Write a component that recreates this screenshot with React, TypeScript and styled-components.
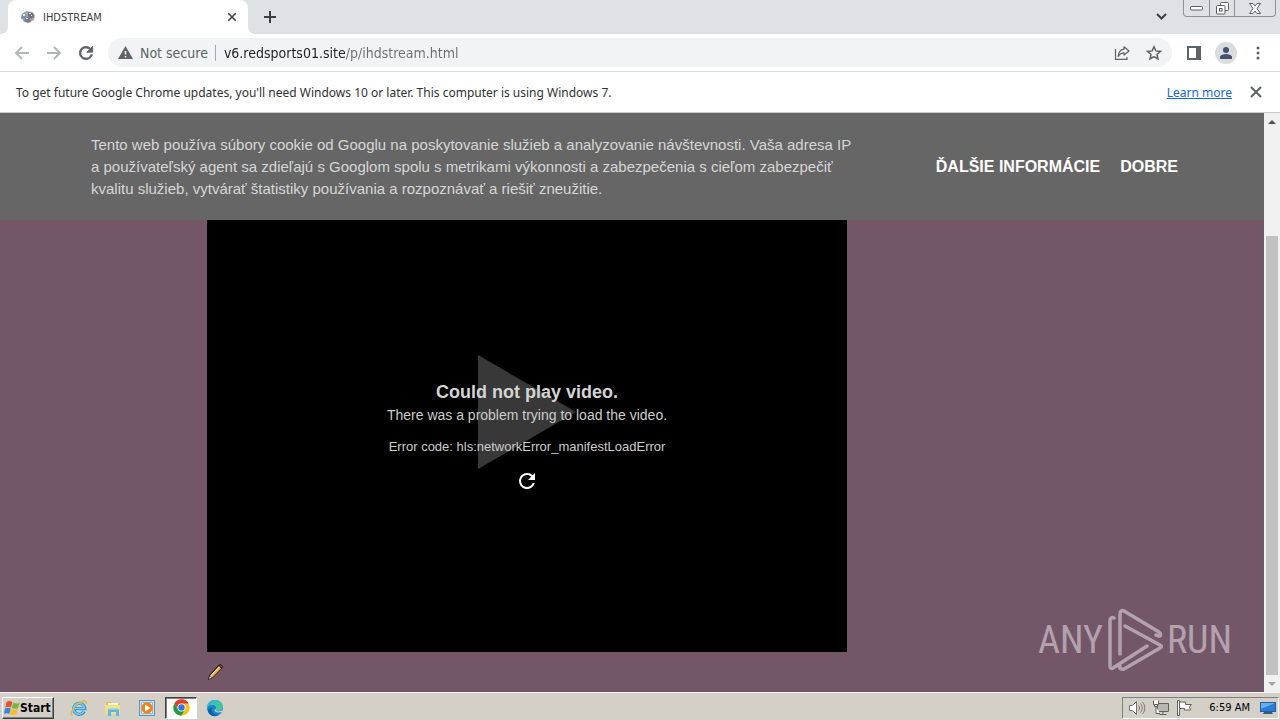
import React from "react";
import styled, { createGlobalStyle, css } from "styled-components";

const uiFont = `"DejaVu Sans Condensed", "DejaVu Sans", sans-serif`;
const pageFont = `"Liberation Sans", Arial, sans-serif`;

const GlobalStyle = createGlobalStyle`
  *, *::before, *::after { box-sizing: border-box; }
  body { margin: 0; background: #fff; font-family: ${uiFont}; }
  button { border: 0; padding: 0; background: none; font: inherit; color: inherit; cursor: pointer; }
  p, h1 { margin: 0; }
  svg { display: block; flex: none; }
`;

const Desktop = styled.div`
  display: flex;
  flex-direction: column;
  min-height: 100vh;
`;

/* Browser chrome */
const TabStrip = styled.header`
  display: flex;
  align-items: flex-start;
  height: 34px;
  padding-left: 8px;
  background: #dee1e6;
`;

const Tab = styled.div`
  position: relative;
  display: flex;
  align-items: center;
  width: 240px;
  height: 34px;
  padding: 0 10px 0 12px;
  background: #fff;
  border-radius: 8px 8px 0 0;
  font-size: 11px;
  color: #3c4043;

  &::before, &::after {
    content: "";
    position: absolute;
    bottom: 0;
    width: 8px;
    height: 8px;
  }
  &::before { left: -8px; background: radial-gradient(circle at 0 0, transparent 8px, #fff 8px); }
  &::after { right: -8px; background: radial-gradient(circle at 100% 0, transparent 8px, #fff 8px); }
`;

const TabTitle = styled.span`
  flex: 1;
  margin-left: 7px;
`;

const IconButton = styled.button<{ $size?: number; $color?: string }>`
  display: flex;
  align-items: center;
  justify-content: center;
  flex: none;
  width: ${(p) => p.$size ?? 32}px;
  height: ${(p) => p.$size ?? 32}px;
  color: ${(p) => p.$color ?? "#5f6368"};
`;

const NewTab = styled(IconButton)`
  margin: 1px 0 0 6px;
  color: #3c4043;
`;

const StripEnd = styled.div`
  display: flex;
  align-items: flex-start;
  margin-left: auto;
  padding-right: 4px;
`;

const WindowButtons = styled.div`
  display: flex;
  height: 17px;
  margin-left: 6px;
  border: 1px solid #8d9199;
  border-top: 0;
  border-radius: 0 0 4px 4px;
  color: #5a5e66;
`;

const WindowButton = styled.button<{ $wide?: boolean }>`
  display: flex;
  align-items: center;
  justify-content: center;
  width: ${(p) => (p.$wide ? 41 : 25)}px;
  height: 16px;
  & + & { border-left: 1px solid #8d9199; }
`;

const Toolbar = styled.div`
  display: flex;
  align-items: center;
  height: 38px;
  padding: 0 6px;
  background: #fff;
  border-bottom: 1px solid #dadce0;
`;

const AddressBar = styled.form`
  display: flex;
  align-items: center;
  flex: 1;
  height: 29px;
  margin: 0 6px;
  padding: 0 2px 0 10px;
  border-radius: 15px;
  background: #f1f3f4;
  font-size: 14px;
`;

const Security = styled.button`
  display: flex;
  align-items: center;
  gap: 7px;
  padding-right: 7px;
  border-right: 1px solid #a5a8ac;
  line-height: 16px;
  color: #5f6368;
`;

const UrlInput = styled.input`
  flex: 1;
  min-width: 0;
  padding: 0 0 0 8px;
  border: 0;
  outline: 0;
  background: linear-gradient(90deg, #202124 129px, #6b6f74 129px);
  background-clip: text;
  color: transparent;
  font: inherit;
`;

const Avatar = styled.span`
  display: flex;
  align-items: flex-end;
  justify-content: center;
  width: 22px;
  height: 22px;
  border-radius: 50%;
  background: #dadce0;
  overflow: hidden;
`;

const InfoBar = styled.div`
  display: flex;
  align-items: center;
  min-height: 41px;
  padding: 0 8px 0 16px;
  background: #fff;
  border-bottom: 1px solid #c9cacc;
  font-family: "Noto Sans", sans-serif;
  font-size: 12px;
  color: #303134;
`;

const LearnMore = styled.a`
  margin: 0 8px 0 auto;
  color: #1967d2;
`;

/* Web page */
const Viewport = styled.main`
  display: flex;
  flex: 1;
  font-family: ${pageFont};
`;

const Page = styled.div`
  position: relative;
  flex: 1;
  min-width: 0;
  background: #735769;
`;

const CookieNotice = styled.section`
  display: flex;
  align-items: center;
  height: 107px;
  padding: 0 86px 0 91px;
  background: #666;
  font-size: 16px;
  line-height: 22px;
`;

const CookieText = styled.p`
  flex: 1;
  max-width: 768px;
  font-size: 15px;
  color: #d6d6d6;
`;

const CookieActions = styled.div`
  display: flex;
  gap: 20px;
  flex: none;
  margin-left: auto;
  color: #fff;
  font-weight: 700;
  a { color: inherit; text-decoration: none; }
`;

const Player = styled.section`
  position: relative;
  display: flex;
  align-items: center;
  justify-content: center;
  max-width: 640px;
  height: 432px;
  padding-bottom: 48px;
  margin-left: 207px;
  background: #000;
`;

const PlayerMessage = styled.div`
  position: absolute;
  inset: 160px 0 auto;
  display: flex;
  flex-direction: column;
  align-items: center;
  color: #ccc;
`;

const ErrorTitle = styled.h1`
  font-size: 18px;
  line-height: 24px;
  color: #d4d4d4;
`;

const ErrorLine = styled.p<{ $code?: boolean }>`
  font-size: ${(p) => (p.$code ? 13 : 14)}px;
  line-height: 22px;
  margin-top: ${(p) => (p.$code ? 10 : 0)}px;
`;

const Retry = styled(IconButton)`
  margin-top: 11px;
`;

const EditLink = styled.a`
  display: inline-block;
  margin: 11px 0 0 207px;
`;

const Watermark = styled.div`
  position: absolute;
  right: 32px;
  bottom: 20px;
  display: flex;
  align-items: center;
  gap: 4px;
  font-family: "Roboto Condensed", "Liberation Sans Narrow", "Liberation Sans Narrow", "Liberation Sans", sans-serif;
  font-size: 38px;
  line-height: 62px;
  color: #b3a2ae;
`;

const Scrollbar = styled.div`
  display: flex;
  flex-direction: column;
  align-items: center;
  flex: none;
  width: 16px;
  background: #f1f1f1;
`;

const ScrollArrow = styled.button`
  display: flex;
  align-items: center;
  justify-content: center;
  width: 16px;
  height: 17px;
`;

const ScrollThumb = styled.div`
  flex: 1;
  width: 12px;
  margin-top: 106px;
  background: #c1c1c1;
`;

/* Taskbar */
const Taskbar = styled.footer`
  display: flex;
  align-items: center;
  height: 28px;
  padding: 2px 1px 0 2px;
  background: #d4d0c8;
  border-top: 1px solid #f4f2ee;
  color: #000;
`;

const StartButton = styled.button`
  display: flex;
  align-items: center;
  width: 52px;
  height: 22px;
  padding-left: 1px;
  background: #d4d0c8;
  border: 1px solid;
  border-color: #fff #404040 #404040 #fff;
  box-shadow: inset -1px -1px #808080;
  font-size: 12px;
  font-weight: 700;
`;

const Launchers = styled.nav`
  display: flex;
  gap: 2px;
  margin-left: 9px;
`;

const Launcher = styled.button<{ $active?: boolean }>`
  display: flex;
  align-items: center;
  justify-content: center;
  width: 32px;
  height: 22px;
  border: 1px solid transparent;
  ${(p) =>
    p.$active &&
    css`
      background: #fff;
      border-color: #404040 #fff #fff #404040;
      box-shadow: inset 1px 1px #808080;
    `}
`;

const Tray = styled.div`
  display: flex;
  align-items: center;
  gap: 6px;
  height: 22px;
  margin-left: auto;
  padding: 0 1px 0 5px;
  border: 1px solid;
  border-color: #808080 #fff #fff #808080;
  font-size: 11px;
`;

const Clock = styled.time`
  margin: 0 4px 0 10px;
`;

/* Icons */
const Stroke = ({ d, size = 16, width = 2 }: { d: string; size?: number; width?: number }) => (
  <svg width={size} height={size} viewBox="0 0 16 16" fill="none" stroke="currentColor" strokeWidth={width}>
    <path d={d} />
  </svg>
);

const Reload = ({ size = 20, weight = 0 }: { size?: number; weight?: number }) => (
  <svg width={size} height={size} viewBox="0 0 24 24" fill="currentColor" stroke="currentColor" strokeWidth={weight}>
    <path d="M17.65 6.35A7.96 7.96 0 0 0 12 4a8 8 0 1 0 7.73 10h-2.08A6 6 0 1 1 12 6c1.66 0 3.14.69 4.22 1.78L13 11h7V4z" />
  </svg>
);

const Favicon = () => (
  <svg width="16" height="16" viewBox="0 0 16 16">
    <path d="M2 5l4-3 6 1 3 3-1 5-5 3-5-1-3-4z" fill="#a7abb0" />
    <path d="M2 5l3-1 2 3-3 3-3-1z" fill="#7499ac" />
    <path d="M8 3l5 1 1 4-3 2-3-3z" fill="#6b717b" />
    <path d="M5 9l4-2 2 5-3 2-4-2z" fill="#7c8289" />
    <path d="M3 5h2v2H3zM9 4h2v1H9zM6 9h2v1H6zM11 6h1v1h-1z" fill="#e9edf0" />
    <path d="M8 11h2v1H8zM12 7h1v2h-1z" fill="#a3616a" />
  </svg>
);

const Chevron = () => <Stroke size={16} width={2} d="M4 6l4.500 4.500L13 6" />;

const Warning = () => (
  <svg width="15" height="14" viewBox="0 0 15 14">
    <path d="M7.500 0L15 13H0z" fill="#5f6368" />
    <path d="M6.700 5h1.600v3.500H6.700zM6.700 10h1.600v1.500H6.700z" fill="#f1f3f4" />
  </svg>
);

const Share = () => (
  <svg width="16" height="16" viewBox="0 0 16 16" fill="none" stroke="currentColor" strokeWidth="1.200">
    <path d="M1.500 4v10.400h11.500v-2.400" />
    <path d="M10 1.800L15 6l-5 4V7.800C7.500 7.800 5.600 9 4.200 11.500c.2-4 2.200-6.800 5.800-7.300z" strokeLinejoin="round" />
  </svg>
);

const Star = () => (
  <svg width="16" height="16" viewBox="0 0 16 16" fill="none" stroke="currentColor" strokeWidth="1.500">
    <path d="M8 1.700l1.900 4.200 4.600.5L11 9.500l1 4.500-4-2.400L4 14l1-4.500L1.500 6.400l4.600-.5z" />
  </svg>
);

const SidePanel = () => (
  <svg width="16" height="16" viewBox="0 0 16 16" fill="currentColor">
    <path fillRule="evenodd" d="M1 1h14v14H1zM3 3v10h7V3z" />
  </svg>
);

const Person = () => (
  <svg width="14" height="20" viewBox="0 0 14 20" fill="#46536f">
    <circle cx="7" cy="6" r="3" />
    <path d="M1 15v-2c0-2 4-3 6-3s6 1 6 3v2z" />
  </svg>
);

const Dots = () => (
  <svg width="4" height="16" viewBox="0 0 4 16" fill="currentColor">
    <circle cx="2" cy="3" r="1.500" /><circle cx="2" cy="8" r="1.500" /><circle cx="2" cy="13" r="1.500" />
  </svg>
);

const MinimizeIcon = () => (
  <svg width="13" height="6" viewBox="0 0 13 6" fill="#fff" stroke="currentColor">
    <rect x=".5" y="1.500" width="12" height="3.500" rx="1" />
  </svg>
);

const RestoreIcon = () => (
  <svg width="13" height="13" viewBox="0 0 13 13" fill="#fff" stroke="currentColor">
    <rect x="4.500" y=".5" width="8" height="8" rx="1" />
    <rect x=".5" y="3.500" width="8.500" height="8.500" rx="1" />
    <rect x="3.500" y="6.500" width="2.500" height="2.500" />
  </svg>
);

const CloseWindowIcon = () => (
  <svg width="12" height="11" viewBox="0 0 12 11" fill="#fff" stroke="currentColor">
    <path d="M.5.5h3.500l2 2.500 2-2.500h3.500L8 5.500l3.500 5H8L6 8l-2 2.500H.5L4 5.500z" strokeLinejoin="round" />
  </svg>
);

const Pencil = () => (
  <svg width="18" height="18" viewBox="0 0 18 18">
    <path d="M2 12.500L11.500 2l2-1 2.500 2.500-1 2L5.500 15 1 17z" fill="#1c1410" />
    <path d="M3 13L12 3.200l2.200 2.200L5 14.800z" fill="#e0a83c" />
    <path d="M3.200 12.700L12 3.200l.9.900-8.700 9.600z" fill="#f8dc92" />
    <path d="M12.500 2.500l1-.6 1.700 1.700-.6 1z" fill="#8a5c4c" />
    <path d="M2.800 13.300l1.800 1.500-2.600 1.100z" fill="#efe0c4" />
  </svg>
);

const AnyRunMark = () => (
  <svg width="56" height="64" viewBox="0 0 56 64" fill="none" stroke="#b3a2ae" strokeWidth="3.500" strokeLinecap="round" strokeLinejoin="round">
    <path d="M7 10c-2-1-4 0-4 3v45c0 2 1 3 3 2l34-22" />
    <path d="M13 46V6c0-3 2-4 4-3l35 21c2 1 2 4 0 4l-3-1" />
    <path d="M18 18l35 19c2 1 2 2 0 3L17 61c-3 1-5-1-4-3" />
  </svg>
);

const WindowsFlag = () => (
  <svg width="16" height="16" viewBox="0 0 16 16">
    <path d="M2.500 2c2-1.400 4-1.200 6 0L7 7.500c-1.700-1-3.800-1-5.700 0z" fill="#e6532b" />
    <path d="M9.300 2.500c2 1.200 4.200 1.200 6.500 0L14 8c-2 1.200-4.100 1-6.200 0z" fill="#76b83a" />
    <path d="M1 8.500c1.900-1 3.900-1 5.700 0l-1.500 5.500c-1.700-1-3.700-1-5.200 0z" fill="#3c86d6" />
    <path d="M7.500 9c2 1 4.100 1.100 6.200 0l-1.500 5.300c-2.200 1.200-4.200 1-6.200-.1z" fill="#f4bd24" />
  </svg>
);

const IeIcon = () => (
  <svg width="18" height="18" viewBox="0 0 18 18" fill="none">
    <path d="M14.200 12.300A5.500 5.500 0 1 1 14.800 9.700H4.500" stroke="#2d8fd0" strokeWidth="3.200" />
    <path d="M14 12A5.500 5.500 0 1 1 14.500 9.500H5" stroke="#7dcdf2" strokeWidth="1.500" />
    <path d="M2.500 16.500C-1 15 4 7 10 3.500c4.500-2.700 7.500-2.200 6 1.500" stroke="#e5b63c" strokeWidth="1.400" />
  </svg>
);

const FolderIcon = () => (
  <svg width="18" height="18" viewBox="0 0 18 18">
    <path d="M2 3h5l1 1.500h8V14H2z" fill="#e3bd58" />
    <path d="M4 4h10v4H4z" fill="#fff9da" />
    <path d="M1 6h15v9H1z" fill="#f7df87" />
    <path d="M4 17v-6c0-1 1-1.500 2-1.500h7c1 0 2 .5 2 1.500v6h-3v-4H7v4z" fill="#60b7df" />
    <path d="M4.500 10h10" stroke="#b5e4f6" />
  </svg>
);

const MediaIcon = () => (
  <svg width="16" height="16" viewBox="0 0 16 16">
    <rect x=".5" y=".5" width="15" height="15" fill="#c7e0f3" stroke="#6396bf" />
    <path d="M2.500 2.500h11v11h-11z" fill="#e9f4fb" stroke="#8db9da" />
    <circle cx="8" cy="8" r="5.700" fill="#f28218" />
    <path d="M6 4.500L11.500 8 6 11.500z" fill="#fff" />
  </svg>
);

const ChromeIcon = () => (
  <svg width="17" height="17" viewBox="0 0 48 48">
    <circle cx="24" cy="24" r="23" fill="#fbc116" />
    <path d="M4 12.500A23 23 0 0 1 44 12.500H24L15 30z" fill="#e33b2e" />
    <path d="M4 12.500A23 23 0 0 0 23.500 47L34 29.500 24 35 14 29.500z" fill="#229a49" />
    <circle cx="24" cy="24" r="11.500" fill="#fff" />
    <circle cx="24" cy="24" r="9" fill="#2e73e8" />
  </svg>
);

const EdgeIcon = () => (
  <svg width="18" height="18" viewBox="0 0 18 18">
    <circle cx="9" cy="9" r="8" fill="#1586d2" />
    <path d="M1 9C1.500 4 5 1 9 1c5 0 8 3.500 8 7 0 3-2.500 4-5 4-1.500 0-3-.4-2.500-1.300C11 8.500 9.500 6 6.500 6 4 6 2 7 1 9z" fill="#3fc5a2" />
    <path d="M1 9c.5-5 4-8 8-8 2 0 4 .7 5.300 2C10 2 6 2.500 1 9z" fill="#35b6df" />
    <path d="M6 8.500C4.500 13 8 16.500 13 15.500c-3 2.500-7 2-9.500-.5C1 12.500 2 9.500 6 8.500z" fill="#0d5eab" />
    <path d="M9.500 10.500c-1 1 .5 2.500 3 2.500 1.500 0 3-.4 4-1.200" stroke="#d4d0c8" strokeWidth="1.200" fill="none" />
  </svg>
);

const Speaker = () => (
  <svg width="18" height="16" viewBox="0 0 18 16" fill="none" stroke="#77746f">
    <path d="M1.500 5.500h3l4-4v13l-4-4h-3z" fill="#fff" />
    <path d="M10.500 5.500c1.300 1.500 1.300 3.500 0 5M12.500 3.500c2.300 2.600 2.300 6.400 0 9M14.500 2c3 3.500 3 8.500 0 12" />
  </svg>
);

const Network = () => (
  <svg width="18" height="16" viewBox="0 0 18 16" fill="#fff" stroke="#66635f">
    <path d="M5.500 3.500h11v8h-11z" fill="#b9b7b3" />
    <path d="M7.500 14.500h7M11 11.500v3" />
    <path d="M1.500.5v4h5v-4M2.500 4.500v2h3v-2M4 6.500v7h4" />
  </svg>
);

const ActionFlag = () => (
  <svg width="17" height="16" viewBox="0 0 17 16" fill="#fff" stroke="#66635f">
    <path d="M1.500.5h2v15h-2z" />
    <path d="M3.500 2h6v2.500h6l-2 2.500 1 3h-6V8.500h-5z" />
  </svg>
);

const Monitor = () => (
  <svg width="17" height="14" viewBox="0 0 17 14">
    <path d="M0 1h16v10H0z" fill="#235da8" />
    <path d="M1 2h14v8H1z" fill="#2c7cd4" />
    <path d="M1 2h14L1 8z" fill="#62b0ee" />
    <path d="M4 11h8l1 2H3z" fill="#355a83" />
  </svg>
);

export default function App() {
  return (
    <Desktop>
      <GlobalStyle />
      <TabStrip>
        <Tab>
          <Favicon />
          <TabTitle>IHDSTREAM</TabTitle>
          <IconButton $size={12} $color="#3c4043" aria-label="Close tab">
            <Stroke size={12} d="M3 3l10 10M13 3L3 13" />
          </IconButton>
        </Tab>
        <NewTab aria-label="New tab"><Stroke d="M8 2v12M2 8h12" /></NewTab>
        <StripEnd>
          <IconButton aria-label="Search tabs" $color="#3c4043"><Chevron /></IconButton>
          <WindowButtons>
            <WindowButton aria-label="Minimize"><MinimizeIcon /></WindowButton>
            <WindowButton aria-label="Restore"><RestoreIcon /></WindowButton>
            <WindowButton $wide aria-label="Close"><CloseWindowIcon /></WindowButton>
          </WindowButtons>
        </StripEnd>
      </TabStrip>

      <Toolbar>
        <IconButton aria-label="Back" $color="#b4b6b9"><Stroke d="M15 8H2M8 2L2 8l6 6" width={2} /></IconButton>
        <IconButton aria-label="Forward" $color="#b4b6b9"><Stroke d="M1 8h13M8 2l6 6-6 6" width={2} /></IconButton>
        <IconButton aria-label="Reload"><Reload weight={1} /></IconButton>
        <AddressBar>
          <Security type="button"><Warning />Not secure</Security>
          <UrlInput aria-label="Address" defaultValue="v6.redsports01.site/p/ihdstream.html" />
          <IconButton type="button" aria-label="Share"><Share /></IconButton>
          <IconButton type="button" aria-label="Bookmark"><Star /></IconButton>
        </AddressBar>
        <IconButton aria-label="Side panel"><SidePanel /></IconButton>
        <IconButton aria-label="Profile"><Avatar><Person /></Avatar></IconButton>
        <IconButton aria-label="Menu"><Dots /></IconButton>
      </Toolbar>

      <InfoBar>
        <span>To get future Google Chrome updates, you'll need Windows 10 or later. This computer is using Windows 7.</span>
        <LearnMore href="#learn">Learn more</LearnMore>
        <IconButton aria-label="Dismiss"><Stroke d="M3 3l10 10M13 3L3 13" width={2} /></IconButton>
      </InfoBar>

      <Viewport>
        <Page>
          <CookieNotice>
            <CookieText>
              Tento web používa súbory cookie od Googlu na poskytovanie služieb a analyzovanie návštevnosti. Vaša adresa IP a používateľský agent sa zdieľajú s Googlom spolu s metrikami výkonnosti a zabezpečenia s cieľom zabezpečiť kvalitu služieb, vytvárať štatistiky používania a rozpoznávať a riešiť zneužitie.
            </CookieText>
            <CookieActions>
              <a href="#info">ĎALŠIE INFORMÁCIE</a>
              <button>DOBRE</button>
            </CookieActions>
          </CookieNotice>
          <Player>
            <svg width="98" height="114" viewBox="0 0 98 114"><path d="M0 0l98 57-98 57z" fill="#383838" /></svg>
            <PlayerMessage>
              <ErrorTitle>Could not play video.</ErrorTitle>
              <ErrorLine>There was a problem trying to load the video.</ErrorLine>
              <ErrorLine $code>Error code: hls:networkError_manifestLoadError</ErrorLine>
              <Retry $size={24} $color="#fff" aria-label="Retry"><Reload size={24} /></Retry>
            </PlayerMessage>
          </Player>
          <EditLink href="#edit" aria-label="Edit"><Pencil /></EditLink>
          <Watermark><span>ANY</span><AnyRunMark /><span>RUN</span></Watermark>
        </Page>
        <Scrollbar>
          <ScrollArrow aria-label="Scroll up"><svg width="8" height="4" viewBox="0 0 8 4"><path d="M0 4l4-4 4 4z" fill="#505050" /></svg></ScrollArrow>
          <ScrollThumb />
          <ScrollArrow aria-label="Scroll down"><svg width="8" height="4" viewBox="0 0 8 4"><path d="M0 0l4 4 4-4z" fill="#a3a3a3" /></svg></ScrollArrow>
        </Scrollbar>
      </Viewport>

      <Taskbar>
        <StartButton><WindowsFlag />Start</StartButton>
        <Launchers>
          <Launcher aria-label="Internet Explorer"><IeIcon /></Launcher>
          <Launcher aria-label="Explorer"><FolderIcon /></Launcher>
          <Launcher aria-label="Media Player"><MediaIcon /></Launcher>
          <Launcher $active aria-label="Chrome"><ChromeIcon /></Launcher>
          <Launcher aria-label="Edge"><EdgeIcon /></Launcher>
        </Launchers>
        <Tray>
          <Speaker />
          <Network />
          <ActionFlag />
          <Clock>6:59 AM</Clock>
          <Monitor />
        </Tray>
      </Taskbar>
    </Desktop>
  );
}
